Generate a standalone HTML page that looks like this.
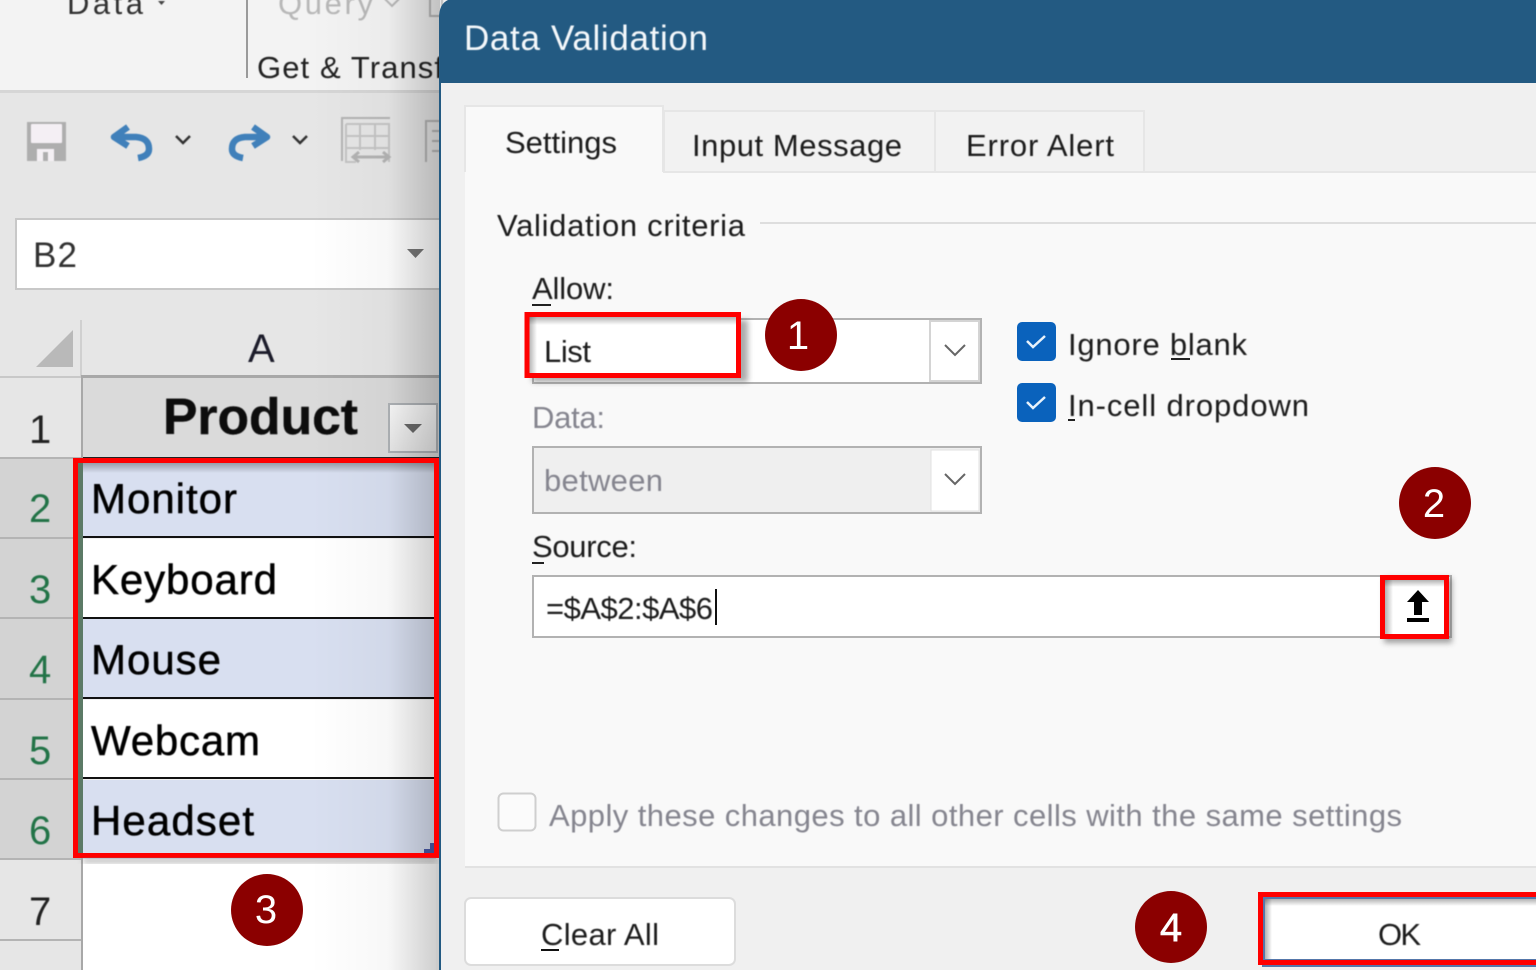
<!DOCTYPE html>
<html><head><meta charset="utf-8"><title>Data Validation</title>
<style>
html,body{margin:0;padding:0;background:#f0f0f0;width:1536px;height:970px;overflow:hidden}
svg{display:block}
text{font-family:"Liberation Sans",sans-serif;white-space:pre}
.d{font-size:31px;fill:#1c1c1c}
.g{font-size:31px;fill:#85858f}
.c{font-size:42px;fill:#000;stroke:#000;stroke-width:.5px}
.r{font-size:40px;fill:#217346}
.b{font-size:40px;fill:#fff;text-anchor:middle}
.soft{filter:url(#s)}
</style></head><body>
<svg width="1536" height="970" viewBox="0 0 1536 970" xmlns="http://www.w3.org/2000/svg">
<defs>
<filter id="s" x="-5%" y="-5%" width="110%" height="110%"><feGaussianBlur stdDeviation="0.45"/></filter>
<filter id="sh" x="-20%" y="-20%" width="140%" height="140%"><feGaussianBlur stdDeviation="3"/></filter>
<linearGradient id="fade" x1="0" x2="1" y1="0" y2="0"><stop offset="0" stop-color="#000" stop-opacity="0"/><stop offset="0.6" stop-color="#000" stop-opacity="0.03"/><stop offset="1" stop-color="#000" stop-opacity="0.2"/></linearGradient>
<linearGradient id="fb" x1="0" x2="0" y1="0" y2="1"><stop offset="0" stop-color="#fafafa"/><stop offset="1" stop-color="#e8e8e8"/></linearGradient>
<linearGradient id="dn" x1="0" x2="0" y1="0" y2="1"><stop offset="0" stop-color="#000" stop-opacity=".3"/><stop offset="1" stop-color="#000" stop-opacity="0"/></linearGradient>
<linearGradient id="rt" x1="0" x2="1" y1="0" y2="0"><stop offset="0" stop-color="#000" stop-opacity=".3"/><stop offset="1" stop-color="#000" stop-opacity="0"/></linearGradient>
</defs>

<!-- Ribbon -->
<rect width="440" height="91" fill="#f3f3f3"/>
<rect y="90" width="440" height="3" fill="#d6d6d6"/>
<rect y="93" width="440" height="227" fill="#e6e6e6"/>
<rect x="246" y="0" width="2" height="78" fill="#9a9a9a"/>
<g class="soft">
<text x="67" y="14" font-size="31" fill="#333" textLength="76">Data</text>
<path d="M158 1h7l-3.500 4z" fill="#444"/>
<text x="278" y="14" font-size="31" fill="#b8b8b8" textLength="95">Query</text>
<path d="M385 -1l7 7 7-7" fill="none" stroke="#b8b8b8" stroke-width="2"/>
<rect x="430" y="-4" width="12" height="20" fill="none" stroke="#b8b8b8" stroke-width="2"/>
<text x="257" y="78" font-size="31" fill="#222" textLength="186">Get &amp; Transf</text>

<!-- Toolbar icons -->
<path d="M27 122h39v39H27z" fill="#aeaeae"/>
<rect x="31" y="124" width="31" height="19" rx="1" fill="#f4eff4"/>
<rect x="37" y="149" width="17" height="12" fill="#f4f0f4"/>
<rect x="43" y="152" width="5" height="9" fill="#aeaeae"/>
<path d="M128 127L114 137L128 146M116 137H136Q149 138 149 149Q149 156 138 158" fill="none" stroke="#4080ba" stroke-width="6.500" stroke-linejoin="round"/>
<path d="M253 127L267 137L253 146M265 137H245Q232 138 232 149Q232 156 243 158" fill="none" stroke="#4080ba" stroke-width="6.500" stroke-linejoin="round"/>
<path d="M176 136l7 7 7-7M293 136l7 7 7-7" fill="none" stroke="#333" stroke-width="2.500"/>
<g fill="none" stroke="#b3b3b3" stroke-width="2">
<path d="M342 161V118h48"/>
<path d="M346 124h43v38M346 124v38h10M346 136h43M346 148h43M360 124v26M375 124v26" stroke="#c4c4c4"/>
<path d="M353 157h36M359 152l-6 5 6 5M383 152l6 5-6 5" stroke-width="3"/>
<path d="M426 162V121h16M432 131h10M432 141h10M432 151h10"/>
</g>
</g>

<!-- Name box -->
<rect x="16" y="219" width="430" height="70" fill="#fff" stroke="#c8c8c8" stroke-width="2"/>
<text class="soft" x="33" y="267" font-size="35" fill="#333" textLength="44">B2</text>
<path d="M407 249h17l-8.500 9z" fill="#777"/>

<!-- Sheet header -->
<rect y="320" width="440" height="56" fill="#e6e6e6"/>
<path d="M36 367L73 330V367Z" fill="#b9b9b9"/>
<rect x="80" y="320" width="2" height="57" fill="#d0d0d0"/>
<rect y="376" width="81" height="2" fill="#c8c8c8"/>
<rect x="81" y="375" width="359" height="3" fill="#a8a8a8"/>
<text class="soft" x="248" y="362" font-size="40" fill="#1c1c2c" textLength="27">A</text>

<!-- Row headers -->
<rect y="378" width="81" height="80" fill="#e6e6e6"/>
<rect y="458" width="81" height="401" fill="#d3d3d3"/>
<rect y="859" width="81" height="111" fill="#e6e6e6"/>
<g fill="#b4b4b4">
<rect y="457" width="81" height="2"/><rect y="537" width="81" height="2"/><rect y="617" width="81" height="2"/><rect y="698" width="81" height="2"/><rect y="778" width="81" height="2"/><rect y="858" width="81" height="2"/><rect y="939" width="81" height="2"/>
</g>
<rect x="81" y="378" width="2" height="592" fill="#a8a8a8"/>
<g class="soft">
<text x="29" y="443" font-size="40" fill="#222">1</text>
<text class="r" x="29" y="522">2</text>
<text class="r" x="29" y="603">3</text>
<text class="r" x="29" y="683">4</text>
<text class="r" x="29" y="764">5</text>
<text class="r" x="29" y="844">6</text>
<text x="29" y="925" font-size="40" fill="#222">7</text>
</g>

<!-- Cells -->
<rect x="83" y="378" width="357" height="79" fill="#dadada"/>
<rect x="83" y="457" width="357" height="2" fill="#222"/>
<rect x="83" y="459" width="357" height="78" fill="#d8dff0"/>
<rect x="83" y="463" width="351" height="10" fill="url(#dn)"/>
<rect x="83" y="539" width="357" height="78" fill="#fff"/>
<rect x="83" y="619" width="357" height="79" fill="#d8dff0"/>
<rect x="83" y="700" width="357" height="78" fill="#fff"/>
<rect x="83" y="780" width="357" height="79" fill="#d8dff0"/>
<rect x="83" y="859" width="357" height="111" fill="#fff"/>
<g fill="#111"><rect x="83" y="536" width="357" height="2"/><rect x="83" y="617" width="357" height="2"/><rect x="83" y="697" width="357" height="2"/><rect x="83" y="777" width="357" height="2"/></g>
<rect x="78" y="463" width="5" height="390" fill="#5c7a66"/>
<path d="M424 853V849H430V843H434V853Z" fill="#4a5aa8"/>

<text class="soft" x="163" y="434" font-size="51" font-weight="700" fill="#0c0c0c" stroke="#0c0c0c" stroke-width=".4" textLength="195" lengthAdjust="spacingAndGlyphs">Product</text>
<g class="soft">
<text class="c" x="91" y="513" textLength="146">Monitor</text>
<text class="c" x="91" y="594" textLength="186">Keyboard</text>
<text class="c" x="91" y="674" textLength="130">Mouse</text>
<text class="c" x="91" y="755" textLength="169">Webcam</text>
<text class="c" x="91" y="835" textLength="163">Headset</text>
</g>

<!-- Filter button -->
<rect x="389" y="404" width="48" height="48" fill="url(#fb)" stroke="#aeb2b6" stroke-width="2"/>
<path d="M404 424h18l-9 9z" fill="#6a6a6a"/>

<!-- Left fade toward the dialog -->
<rect x="310" y="0" width="130" height="970" fill="url(#fade)"/>
<rect x="436" y="858" width="4" height="112" fill="#ccc"/>

<!-- Red box 3 -->
<rect x="75.500" y="460.500" width="361" height="395" fill="none" stroke="#ff0000" stroke-width="5"/>
<rect x="83" y="858" width="354" height="5" fill="#777" opacity=".5" filter="url(#sh)"/>
<circle cx="267" cy="910" r="36" fill="#8b0000"/>
<text class="b" x="266" y="923">3</text>

<!-- Dialog -->
<path d="M439 970V18Q439 4 448 0H1536V970Z" fill="#235a82"/>
<rect x="441" y="83" width="1095" height="887" fill="#f0f0f0"/>
<text class="soft" x="464" y="50" font-size="35" fill="#f4f8fb" textLength="244">Data Validation</text>

<!-- Tabs -->
<rect x="465" y="172" width="1071" height="694" fill="#f9f9f9"/>
<rect x="465" y="866" width="1071" height="2" fill="#e2e2e2"/>
<rect x="664" y="111" width="271" height="61" fill="#f2f2f2" stroke="#e6e6e6" stroke-width="2"/>
<rect x="935" y="111" width="209" height="61" fill="#f2f2f2" stroke="#e6e6e6" stroke-width="2"/>
<rect x="665" y="171" width="871" height="2" fill="#e6e6e6"/>
<rect x="465" y="106" width="198" height="67" fill="#f9f9f9"/>
<path d="M465 172V106H663V172" fill="none" stroke="#e6e6e6" stroke-width="2"/>
<g class="soft">
<text class="d" x="505" y="153" textLength="112">Settings</text>
<text class="d" x="692" y="156" textLength="210">Input Message</text>
<text class="d" x="966" y="156" textLength="148">Error Alert</text>
<text class="d" x="497" y="236" textLength="248">Validation criteria</text>
</g>
<rect x="760" y="222" width="776" height="2" fill="#dedede"/>

<!-- Allow -->
<text class="soft d" x="532" y="299" textLength="82">Allow:</text>
<rect x="532" y="304" width="19" height="2" fill="#222"/>
<rect x="533" y="319" width="448" height="64" fill="#fff" stroke="#b2b2b2" stroke-width="2"/>
<rect x="930" y="321" width="49" height="60" fill="#fff" stroke="#d4d4d4" stroke-width="2"/>
<path d="M945 345l10 10 10-10" fill="none" stroke="#666" stroke-width="2"/>
<rect x="532" y="320" width="216" height="62" fill="#666" opacity=".55" filter="url(#sh)"/>
<rect x="529" y="317" width="208" height="57" fill="#fff"/>
<rect x="529" y="317" width="208" height="8" fill="url(#dn)"/>
<rect x="529" y="317" width="8" height="57" fill="url(#rt)"/>
<rect x="527" y="314.500" width="211.500" height="61" fill="none" stroke="#ff0000" stroke-width="5"/>
<text class="soft d" x="544" y="362" textLength="47">List</text>
<circle cx="801" cy="335" r="36" fill="#8b0000"/>
<text class="b" x="798" y="349">1</text>

<!-- Data -->
<text class="soft g" x="532" y="428" textLength="73">Data:</text>
<rect x="533" y="447" width="448" height="66" fill="#efefef" stroke="#b2b2b2" stroke-width="2"/>
<rect x="931" y="450" width="48" height="61" fill="#fff" stroke="#e0e0e0" stroke-width="1"/>
<path d="M945 474l10 10 10-10" fill="none" stroke="#666" stroke-width="2"/>
<text class="soft g" x="544" y="491" textLength="119">between</text>

<!-- Checkboxes -->
<rect x="1017" y="322" width="39" height="39" rx="5" fill="#0a62bc"/>
<path d="M1027 341l6 6 12-11" fill="none" stroke="#e8f2fb" stroke-width="2.500"/>
<rect x="1017" y="383" width="39" height="39" rx="5" fill="#0a62bc"/>
<path d="M1027 402l6 6 12-11" fill="none" stroke="#e8f2fb" stroke-width="2.500"/>
<g class="soft">
<text class="d" x="1068" y="355" textLength="179">Ignore blank</text>
<text class="d" x="1068" y="416" textLength="241">In-cell dropdown</text>
</g>
<rect x="1171" y="358" width="19" height="2" fill="#222"/>
<rect x="1068" y="419" width="7" height="2" fill="#222"/>

<circle cx="1435" cy="503" r="36" fill="#8b0000"/>
<text class="b" x="1434" y="517">2</text>

<!-- Source -->
<text class="soft d" x="532" y="557" textLength="105">Source:</text>
<rect x="532" y="562" width="12" height="2" fill="#222"/>
<rect x="533" y="576" width="918" height="61" fill="#fff" stroke="#b2b2b2" stroke-width="2"/>
<text class="soft d" x="546" y="619" textLength="167">=$A$2:$A$6</text>
<rect x="715" y="589" width="2" height="36" fill="#111"/>
<rect x="1384" y="578" width="68" height="65" fill="#666" opacity=".6" filter="url(#sh)"/>
<rect x="1383" y="578" width="63" height="58" fill="#fff"/>
<rect x="1385" y="580" width="8" height="54" fill="url(#rt)"/>
<rect x="1385" y="580" width="60" height="7" fill="url(#dn)"/>
<path d="M1418 590L1429 602H1422V615H1414V602H1407Z" fill="#000"/>
<rect x="1407" y="618" width="22" height="4" fill="#000"/>
<rect x="1382.500" y="577.500" width="64" height="59" fill="none" stroke="#ff0000" stroke-width="5"/>

<!-- Apply -->
<rect x="498.500" y="793.500" width="37" height="37" rx="5" fill="#fbfbfb" stroke="#cfcfcf" stroke-width="2"/>
<text class="soft g" x="549" y="826" textLength="853">Apply these changes to all other cells with the same settings</text>

<!-- Buttons -->
<rect x="465" y="898" width="270" height="67" rx="6" fill="#fff" stroke="#dcdcdc" stroke-width="2"/>
<text class="soft d" x="541" y="945" textLength="118">Clear All</text>
<rect x="541" y="949" width="18" height="2" fill="#111"/>
<circle cx="1171" cy="927" r="36" fill="#8b0000"/>
<text class="b" x="1171" y="941" stroke="#fff" stroke-width=".6">4</text>
<rect x="1262" y="897" width="290" height="70" fill="#5577aa"/>
<rect x="1265" y="899" width="280" height="60" fill="#fff"/>
<rect x="1265" y="899" width="280" height="7" fill="url(#dn)"/>
<rect x="1265" y="899" width="7" height="60" fill="url(#rt)"/>
<rect x="1260.500" y="894.500" width="290" height="68" fill="none" stroke="#ff0000" stroke-width="5"/>
<text class="soft d" x="1378" y="945" textLength="43">OK</text>
</svg>
</body></html>
